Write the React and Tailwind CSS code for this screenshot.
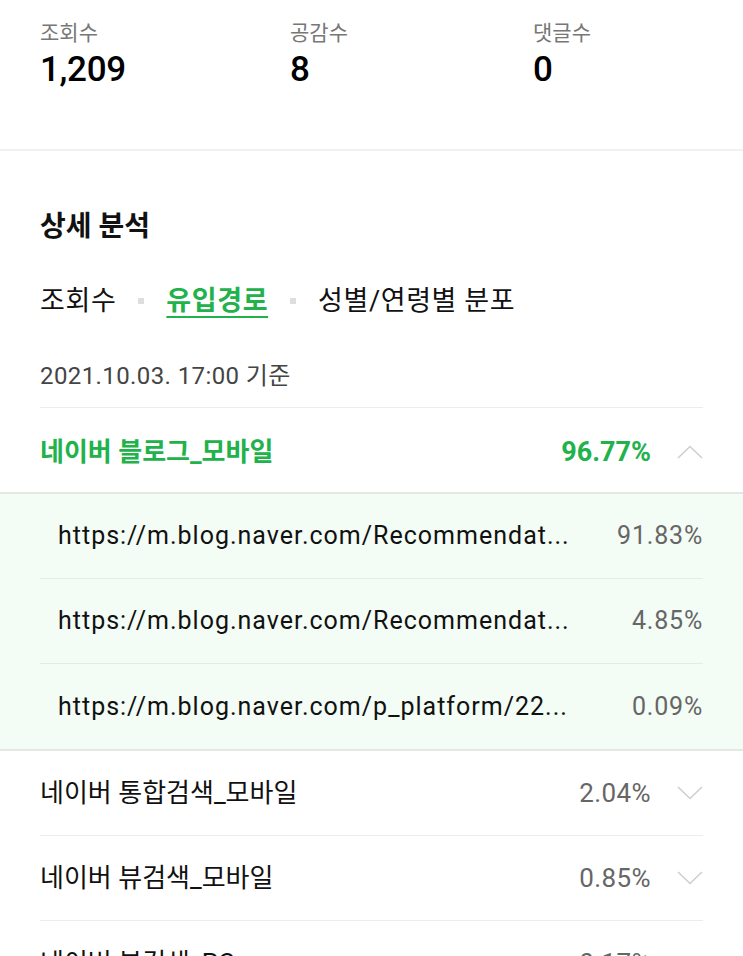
import React from "react";

const font = { fontFamily: 'Roboto, "Noto Sans CJK KR", "Noto Sans", sans-serif' };

function Chevron({ up }) {
  return (
    <svg width="26" height="14" viewBox="0 0 26 14" fill="none" className="shrink-0">
      <path
        d={up ? "M1 13 L13 1.5 L25 13" : "M1 1 L13 12.5 L25 1"}
        stroke="#cfcfcf"
        strokeWidth="1.6"
        fill="none"
      />
    </svg>
  );
}

function Stat({ label, value }) {
  return (
    <div className="flex flex-col">
      <div className="text-[21px] leading-[26px] text-[#777]">{label}</div>
      <div className="mt-[4px] text-[35px] leading-[40px] font-medium text-black tracking-[-0.3px]">{value}</div>
    </div>
  );
}

function SubRow({ url, pct, last }) {
  return (
    <div className={`flex h-[85px] items-center justify-between ${last ? "" : "border-b border-[#e6ebe7]"}`}>
      <div className="pl-[18px] text-[25px] text-[#111] tracking-[1px]">{url}</div>
      <div className="text-[25px] text-[#666] tracking-[0.8px]">{pct}</div>
    </div>
  );
}

function Row({ label, pct, last }) {
  return (
    <div className={`flex h-[85px] items-center justify-between ${last ? "" : "border-b border-[#ececec]"}`}>
      <div className="text-[26px] text-[#111]">{label}</div>
      <div className="flex items-center gap-[26px]">
        <span className="text-[26px] text-[#666] tracking-[0.4px]">{pct}</span>
        <Chevron />
      </div>
    </div>
  );
}

export default function App() {
  return (
    <div className="w-[743px] h-[956px] overflow-hidden bg-white" style={font}>
      <div className="flex h-[149px] px-[40px] pt-[20px]">
        <div className="w-[250px]"><Stat label="조회수" value="1,209" /></div>
        <div className="w-[243px]"><Stat label="공감수" value="8" /></div>
        <div><Stat label="댓글수" value="0" /></div>
      </div>
      <div className="h-[2px] bg-[#f1f1f1]" />

      <div className="px-[40px] pt-[58px]">
        <div className="text-[28px] leading-[36px] font-bold text-[#111]">상세 분석</div>
        <div className="mt-[38px] flex items-center text-[27px] leading-[36px] text-[#111] tracking-[0.6px]">
          <span>조회수</span>
          <span className="mx-[22px] h-[6px] w-[6px] bg-[#dedede]" />
          <span className="font-bold text-[#21b24b] underline decoration-[2px] underline-offset-[6px]">유입경로</span>
          <span className="mx-[22px] h-[6px] w-[6px] bg-[#dedede]" />
          <span>성별/연령별 분포</span>
        </div>
        <div className="mt-[41px] text-[24px] leading-[32px] text-[#444] tracking-[0.4px] pb-[15px] border-b border-[#ececec]">
          2021.10.03. 17:00 기준
        </div>
        <div className="flex h-[84px] items-center justify-between pt-[4px]">
          <div className="text-[26px] font-bold text-[#21b24b]">네이버 블로그_모바일</div>
          <div className="flex items-center gap-[26px]">
            <span className="text-[27px] font-bold text-[#21b24b]">96.77%</span>
            <Chevron up />
          </div>
        </div>
      </div>

      <div className="border-y-2 border-[#e4e8e5] bg-[#f3fcf5] px-[40px]">
        <SubRow url="https://m.blog.naver.com/Recommendat..." pct="91.83%" />
        <SubRow url="https://m.blog.naver.com/Recommendat..." pct="4.85%" />
        <SubRow url="https://m.blog.naver.com/p_platform/22..." pct="0.09%" last />
      </div>

      <div className="px-[40px]">
        <Row label="네이버 통합검색_모바일" pct="2.04%" />
        <Row label="네이버 뷰검색_모바일" pct="0.85%" />
        <Row label="네이버 뷰검색_PC" pct="0.17%" last />
      </div>
    </div>
  );
}
